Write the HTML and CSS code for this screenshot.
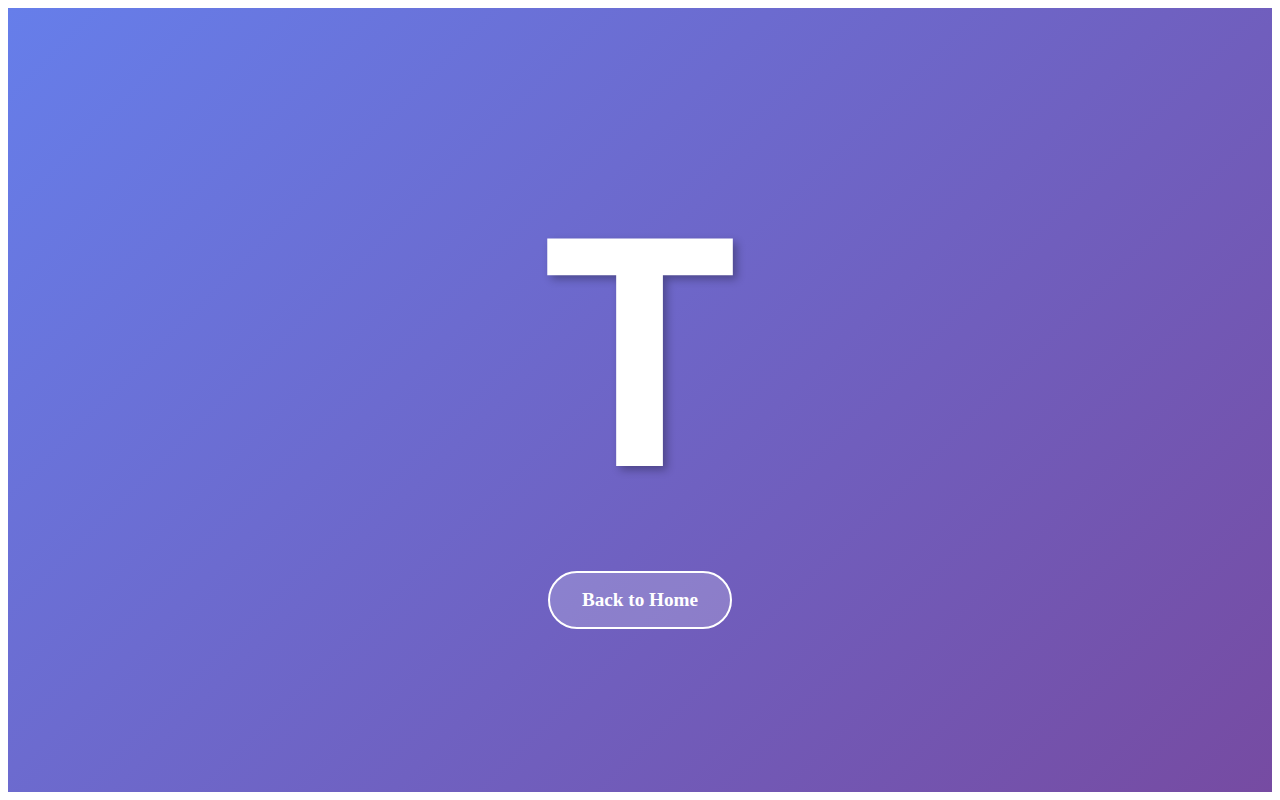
FILE: index.html
```html
<!DOCTYPE html>
<html lang="en">
<head>
<meta charset="utf-8">
<title>T</title>
<link rel="stylesheet" href="styles.css">
</head>
<body>
<main class="page">
  <div class="letter">T</div>
  <a class="home-btn" href="#">Back to Home</a>
</main>
</body>
</html>
```
FILE: styles.css
```css
body {
  margin: 8px;
}

.page {
  height: 784px;
  background: linear-gradient(135deg, #667eea 0%, #764ba2 100%);
  display: flex;
  flex-direction: column;
  align-items: center;
  justify-content: center;
}

.letter {
  font-family: Roboto, "Liberation Sans", sans-serif;
  font-weight: bold;
  font-size: 320px;
  line-height: 1.16;
  color: #ffffff;
  text-shadow: 4px 4px 8px rgba(0, 0, 0, 0.3);
  margin-bottom: 29px;
}

.home-btn {
  font-family: "Liberation Serif", "Times New Roman", serif;
  font-weight: bold;
  font-size: 19.2px;
  color: #ffffff;
  text-decoration: none;
  padding: 16px 32px;
  border: 2px solid #ffffff;
  border-radius: 30px;
  background: rgba(255, 255, 255, 0.2);
}
```
